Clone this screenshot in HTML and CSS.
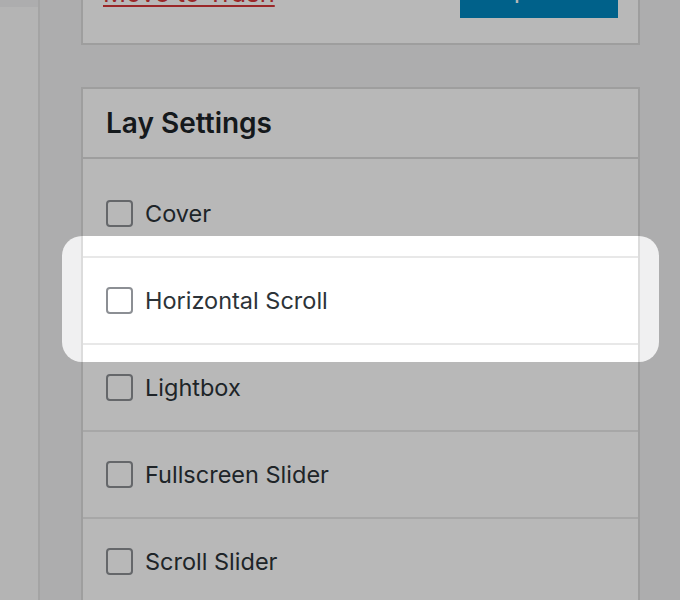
FILE: index.html
```html
<!DOCTYPE html>
<html lang="en">
<head>
<meta charset="utf-8">
<title>Lay Settings</title>
<link rel="stylesheet" href="styles.css">
</head>
<body>
<div class="screen">
  <aside class="left-col"><div class="left-panel"></div></aside>
  <main class="sidebar">
    <section class="postbox publish">
      <div class="publish-actions">
        <a class="trash" href="#">Move to Trash</a>
        <button class="btn-primary" type="button">Update</button>
      </div>
    </section>
    <section class="postbox lay">
      <h2 class="postbox-title">Lay Settings</h2>
      <ul class="options">
        <li class="option"><span class="check"></span><span class="label">Cover</span></li>
        <li class="option is-spot"><span class="check"></span><span class="label">Horizontal Scroll</span><span class="spotlight"></span></li>
        <li class="option"><span class="check"></span><span class="label">Lightbox</span></li>
        <li class="option"><span class="check"></span><span class="label">Fullscreen Slider</span></li>
        <li class="option"><span class="check"></span><span class="label">Scroll Slider</span></li>
      </ul>
    </section>
  </main>
</div>
</body>
</html>
```
FILE: styles.css
```css
html, body {
  margin: 0;
  padding: 0;
}
body {
  background: #f0f0f1;
  font-family: Inter, "Noto Sans", sans-serif;
  color: #2c3338;
  overflow: hidden;
  height: 600px;
}
.screen {
  display: flex;
  height: 600px;
}
.left-col {
  width: 38px;
  flex: none;
  border-right: 2px solid #e3e3e3;
  display: flex;
  flex-direction: column;
}
.left-panel {
  margin-top: 7px;
  flex: 1;
  background: #fafafa;
}
.sidebar {
  margin-left: 41px;
  width: 559px;
  flex: none;
}
.postbox {
  background: #fff;
  border: 2px solid #dcdcdc;
}
.publish {
  margin-top: -43px;
  padding: 0 20px 24px;
}
.publish-actions {
  display: flex;
  justify-content: space-between;
  align-items: flex-start;
}
.trash {
  margin-top: 19px;
  font-size: 25.5px;
  line-height: 30px;
  color: #d63638;
  text-decoration: underline;
  text-decoration-thickness: 2px;
  text-underline-offset: 3px;
}
.btn-primary {
  width: 158px;
  height: 59px;
  border: 0;
  border-radius: 0;
  background: #0087bf;
  color: #fff;
  font-family: inherit;
  font-size: 26px;
  line-height: 30px;
  padding: 0;
  margin-bottom: 1px;
}
.lay {
  margin-top: 42px;
}
.postbox-title {
  margin: 0;
  height: 70px;
  box-sizing: border-box;
  padding: 0 23px;
  display: flex;
  align-items: center;
  font-size: 28px;
  font-weight: 600;
  color: #1d2327;
  border-bottom: 2px solid #dcdcdc;
}
.options {
  list-style: none;
  margin: 0;
  padding: 12px 0 0;
}
.option {
  height: 85px;
  border-bottom: 2px solid #e8e8e8;
  display: flex;
  align-items: center;
  padding: 0 23px;
  position: relative;
}
.check {
  width: 27px;
  height: 27px;
  box-sizing: border-box;
  border: 2px solid #8c8f94;
  border-radius: 4px;
  background: #fff;
  flex: none;
}
.label {
  margin-left: 12px;
  font-size: 23.5px;
  color: #2c3338;
}
.spotlight {
  position: absolute;
  left: -21px;
  right: -21px;
  top: -22px;
  bottom: -19px;
  border-radius: 20px;
  box-shadow: 0 0 0 1200px rgba(0, 0, 0, 0.28);
  z-index: 10;
  pointer-events: none;
}
```
